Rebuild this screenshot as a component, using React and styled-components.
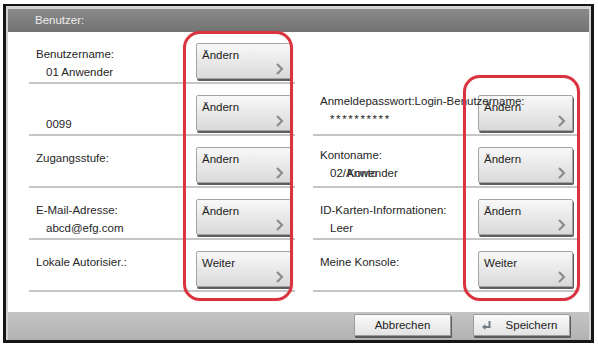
import styled, { createGlobalStyle } from 'styled-components'

const GlobalStyle = createGlobalStyle`
  html, body {
    margin: 0;
    padding: 0;
    background: #ffffff;
  }
  body {
    font-family: "Liberation Sans", Arial, sans-serif;
  }
`

const rows = [
  {
    left: { label: 'Benutzername:', value: '01 Anwender', action: 'Ändern' },
    right: null,
  },
  {
    left: { label: '', value: '0099', action: 'Ändern' },
    right: { label: 'Anmeldepasswort:Login-Benutzername:', value: '**********', masked: true, action: 'Ändern', lift: 5 },
  },
  {
    left: { label: 'Zugangsstufe:', value: '', action: 'Ändern' },
    right: { label: 'Kontoname:', value: 'konto', action: 'Ändern', lift: 3 },
  },
  {
    left: { label: 'E-Mail-Adresse:', value: 'abcd@efg.com', action: 'Ändern' },
    right: { label: 'ID-Karten-Informationen:', value: 'Leer', action: 'Ändern' },
  },
  {
    left: { label: 'Lokale Autorisier.:', value: '', action: 'Weiter' },
    right: { label: 'Meine Konsole:', value: '', action: 'Weiter' },
  },
]

const Chevron = () => (
  <svg width="9" height="12" viewBox="0 0 9 12">
    <polyline points="2,1 7,6 2,11" fill="none" stroke="#8c8c8c" strokeWidth="2.2" />
  </svg>
)

const EnterIcon = () => (
  <svg width="12" height="12" viewBox="0 0 12 12">
    <path d="M9.5 2 V8 H3.5" fill="none" stroke="#6f7c82" strokeWidth="2" />
    <path d="M5.5 5 L2 8 L5.5 11 Z" fill="#6f7c82" />
  </svg>
)

const Setting = ({ item }) => (
  <Row>
    <Info $lift={item.lift || 0}>
      <Label>{item.label || '\u00a0'}</Label>
      {item.value === 'konto' ? (
        <Value>
          02/<Overprinted>Anwen<Overprint>Konto</Overprint></Overprinted>der
        </Value>
      ) : (
        item.value && <Value $masked={item.masked}>{item.value}</Value>
      )}
    </Info>
    <ActionButton>
      {item.action}
      <ChevronSlot>
        <Chevron />
      </ChevronSlot>
    </ActionButton>
  </Row>
)

const App = () => {
  return (
    <>
      <GlobalStyle />
      <Screen>
        <Header>Benutzer:</Header>
        <Content>
          {rows.map((r, i) => [
            <Setting key={'l' + i} item={r.left} />,
            r.right ? <Setting key={'r' + i} item={r.right} /> : <EmptyCell key={'r' + i} />,
          ])}
        </Content>
        <Footer>
          <FooterButton>Abbrechen</FooterButton>
          <FooterButton>
            <EnterIcon />
            <span>Speichern</span>
          </FooterButton>
        </Footer>
        <Highlight $left={177} $top={25} $width={110} $height={270} />
        <Highlight $left={457} $top={69} $width={117} $height={226} />
      </Screen>
    </>
  )
}

const Screen = styled.div`
  position: relative;
  box-sizing: border-box;
  width: 591px;
  height: 339px;
  margin: 4px 0 0 3px;
  border-style: solid;
  border-color: #161616;
  border-width: 2px 3px 3px 3px;
  padding: 3px 2px 0 2px;
  background: #d2d2d2;
  display: flex;
  flex-direction: column;
`

const Header = styled.div`
  height: 23px;
  line-height: 23px;
  padding-left: 27px;
  background: linear-gradient(#8a8a8a, #737373);
  color: #ececec;
  font-size: 11.5px;
`

const Content = styled.div`
  height: 280px;
  box-sizing: border-box;
  background: #ffffff;
  padding-left: 21px;
  display: grid;
  grid-template-columns: 266px 264px;
  grid-auto-rows: 52px;
  column-gap: 18px;
  align-content: start;
`

const Row = styled.div`
  box-sizing: border-box;
  border-bottom: 2px solid #c6c6c6;
  display: flex;
  justify-content: space-between;
  padding: 0 4px 0 7px;
`

const EmptyCell = styled.div``

const Info = styled.div`
  position: relative;
  z-index: 1;
  flex: 1;
  min-width: 0;
  padding-top: ${({ $lift }) => 14 - $lift}px;
  white-space: nowrap;
  color: #262626;
  font-size: 11.5px;
`

const Label = styled.div`
  line-height: 17px;
`

const Value = styled.div`
  line-height: 17px;
  margin-top: 1px;
  padding-left: 10px;
  letter-spacing: ${({ $masked }) => ($masked ? '1.6px' : 'normal')};
`

const Overprinted = styled.span`
  position: relative;
  display: inline-block;
  vertical-align: top;
`

const Overprint = styled.span`
  position: absolute;
  left: 1px;
  top: 0;
  line-height: 17px;
  color: #3a3a3a;
`

const ActionButton = styled.button`
  position: relative;
  align-self: flex-end;
  box-sizing: border-box;
  width: 95px;
  height: 36px;
  margin: 0 0 3px 0;
  padding: 5px 0 0 5px;
  border: 1px solid #a4a4a4;
  border-radius: 2px;
  background: linear-gradient(#f8f8f8, #e6e6e6 60%, #d9d9d9);
  box-shadow: 1px 2px 0 #5e5e5e;
  font-family: "Liberation Sans", Arial, sans-serif;
  font-size: 11.5px;
  color: #222;
  text-align: left;
  display: flex;
  align-items: flex-start;
`

const ChevronSlot = styled.span`
  position: absolute;
  right: 6px;
  bottom: 3px;
  display: flex;
`

const Footer = styled.div`
  flex: 1;
  display: flex;
  justify-content: flex-end;
  align-items: flex-start;
  gap: 22px;
  padding: 2px 19px 0 0;
  background: linear-gradient(#c4c4c4, #b2b2b2);
`

const FooterButton = styled.button`
  box-sizing: border-box;
  width: 97px;
  height: 22px;
  padding: 0 6px;
  border: 1px solid #9c9c9c;
  border-radius: 1px;
  background: linear-gradient(#fafafa, #e3e3e3);
  box-shadow: 1px 2px 0 #5a5a5a;
  font-family: "Liberation Sans", Arial, sans-serif;
  font-size: 11.5px;
  color: #222;
  display: flex;
  align-items: center;
  justify-content: center;
  gap: 14px;

  svg {
    margin-left: -6px;
  }
`

const Highlight = styled.div`
  position: absolute;
  left: ${({ $left }) => $left}px;
  top: ${({ $top }) => $top}px;
  width: ${({ $width }) => $width}px;
  height: ${({ $height }) => $height}px;
  box-sizing: border-box;
  border: 3px solid #d9333f;
  border-radius: 17px;
  box-shadow: 0 0 1px rgba(217, 51, 63, 0.6);
  pointer-events: none;
  z-index: 2;
`

export default App
